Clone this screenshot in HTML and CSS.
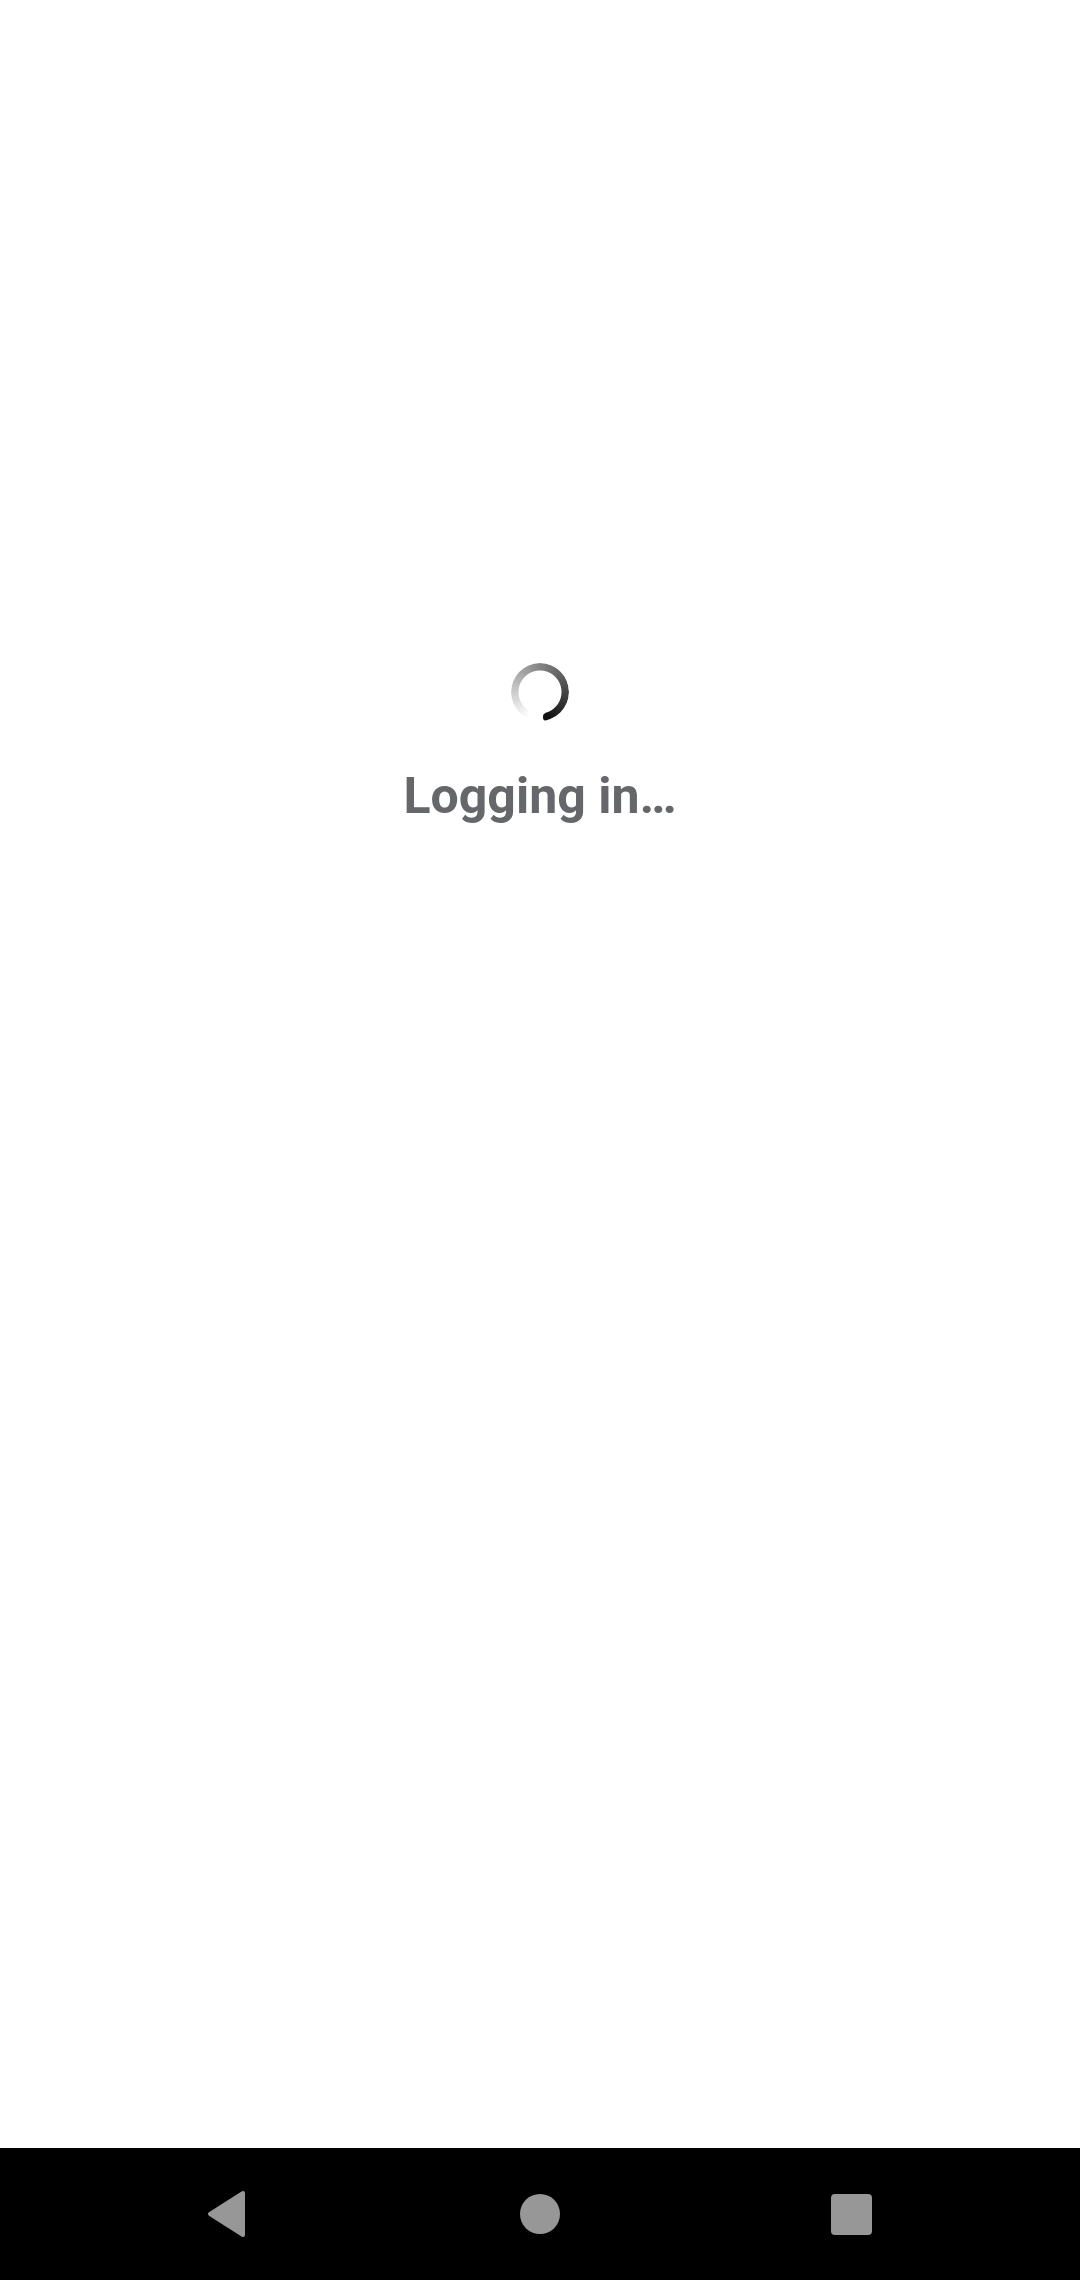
FILE: index.html
```html
<!DOCTYPE html>
<html lang="en">
<head>
<meta charset="utf-8">
<title>Logging in</title>
<link rel="stylesheet" href="styles.css">
</head>
<body>
<main class="screen">
  <div class="loader">
    <div class="spinner"><span class="cap"></span></div>
    <p class="label">Logging in…</p>
  </div>
</main>
<nav class="navbar">
  <div class="slot slot-back">
    <svg width="40" height="48" viewBox="0 0 40 48"><path d="M37 3 L4 24 L37 45 Z" fill="#979797" stroke="#979797" stroke-width="4" stroke-linejoin="round"/></svg>
  </div>
  <div class="slot slot-home"><span class="home"></span></div>
  <div class="slot slot-recent"><span class="recent"></span></div>
</nav>
</body>
</html>
```
FILE: styles.css
```css
html, body {
  margin: 0;
  padding: 0;
  background: #ffffff;
}
body {
  width: 1080px;
  height: 2280px;
  display: flex;
  flex-direction: column;
  font-family: Roboto, "Liberation Sans", sans-serif;
}
.screen {
  height: 2148px;
  display: flex;
  flex-direction: column;
  align-items: center;
}
.loader {
  padding-top: 663px;
  display: flex;
  flex-direction: column;
  align-items: center;
}
.spinner {
  position: relative;
  width: 58px;
  height: 58px;
  border-radius: 50%;
  background: conic-gradient(from 205deg, rgba(17,17,17,0) 0deg, rgba(17,17,17,0.5) 150deg, #111 320deg, rgba(17,17,17,0) 320deg);
  -webkit-mask: radial-gradient(circle, transparent 21px, #000 22px);
  mask: radial-gradient(circle, transparent 21px, #000 22px);
}
.cap {
  position: absolute;
  left: 32px;
  top: 50px;
  width: 7.5px;
  height: 7.5px;
  border-radius: 50%;
  background: #111;
}
.label {
  margin: 45px 0 0;
  font-size: 50px;
  font-weight: 700;
  color: #66676b;
  line-height: 61px;
}
.navbar {
  height: 132px;
  background: #000;
  display: flex;
  align-items: center;
  padding-left: 156px;
}
.slot {
  width: 140px;
  height: 132px;
  display: flex;
  align-items: center;
  justify-content: center;
}
.slot-home {
  margin-left: 174px;
}
.slot-recent {
  margin-left: 171px;
}
.home {
  width: 40px;
  height: 40px;
  border-radius: 50%;
  background: #979797;
}
.recent {
  width: 41px;
  height: 41px;
  border-radius: 4px;
  background: #979797;
}
```
